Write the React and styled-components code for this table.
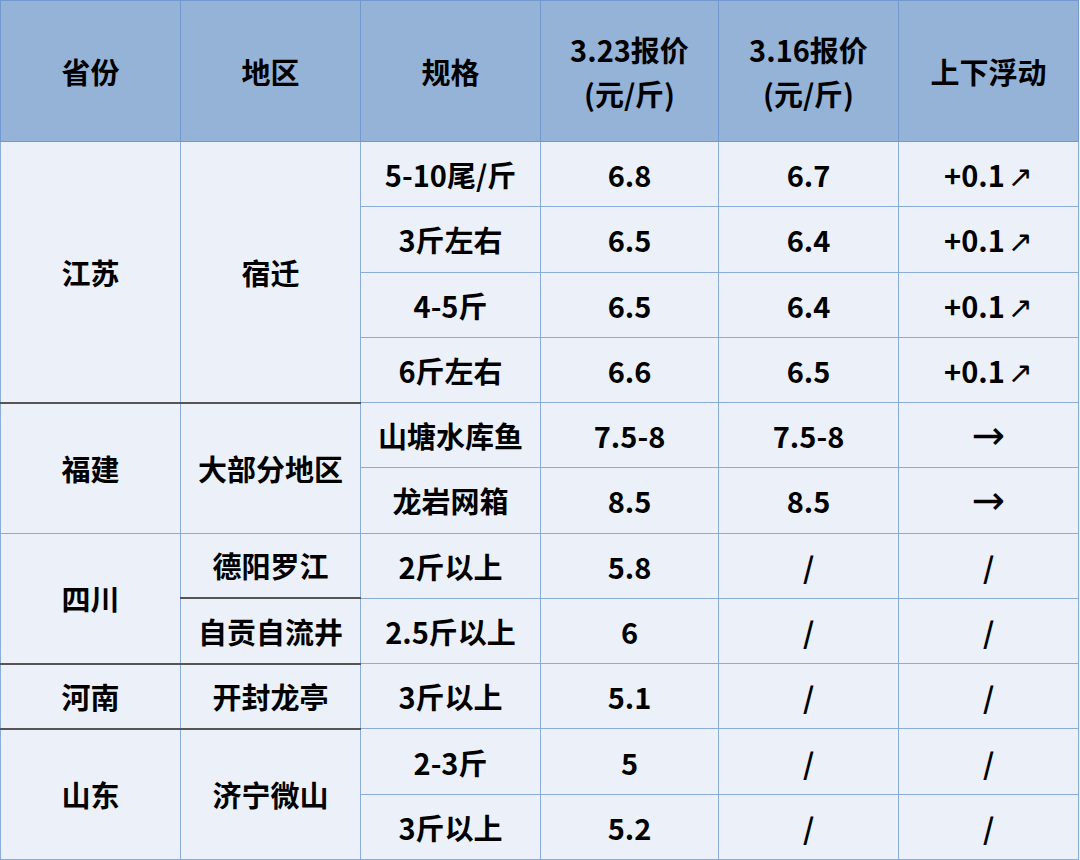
import React from 'react';
import styled, { createGlobalStyle } from 'styled-components';

const GlobalStyle = createGlobalStyle`
  html, body {
    margin: 0;
    padding: 0;
    background: #ecf1f9;
  }
  body {
    font-family: "Microsoft YaHei", "Noto Sans CJK SC", "Noto Sans", sans-serif;
  }
`;

const headers = ['省份', '地区', '规格', ['3.23报价', '(元/斤)'], ['3.16报价', '(元/斤)'], '上下浮动'];

// province / region cells carry rowSpan, the rest are plain
const rows = [
  { prov: ['江苏', 4], area: ['宿迁', 4], spec: '5-10尾/斤', now: '6.8', prev: '6.7', diff: '+0.1', arrow: '↗' },
  { spec: '3斤左右', now: '6.5', prev: '6.4', diff: '+0.1', arrow: '↗' },
  { spec: '4-5斤', now: '6.5', prev: '6.4', diff: '+0.1', arrow: '↗' },
  { spec: '6斤左右', now: '6.6', prev: '6.5', diff: '+0.1', arrow: '↗' },
  { prov: ['福建', 2], area: ['大部分地区', 2], spec: '山塘水库鱼', now: '7.5-8', prev: '7.5-8', arrow: '→', sep: true },
  { spec: '龙岩网箱', now: '8.5', prev: '8.5', arrow: '→' },
  { prov: ['四川', 2], area: ['德阳罗江', 1], spec: '2斤以上', now: '5.8', prev: '/', diff: '/' },
  { area: ['自贡自流井', 1], spec: '2.5斤以上', now: '6', prev: '/', diff: '/', areaSep: true },
  { prov: ['河南', 1], area: ['开封龙亭', 1], spec: '3斤以上', now: '5.1', prev: '/', diff: '/', sep: true },
  { prov: ['山东', 2], area: ['济宁微山', 2], spec: '2-3斤', now: '5', prev: '/', diff: '/', sep: true },
  { spec: '3斤以上', now: '5.2', prev: '/', diff: '/' },
];

const App = () => (
  <>
    <GlobalStyle />
    <Table>
      <colgroup>
        {headers.map((_, i) => (
          <col key={i} style={{ width: i === 3 ? '178px' : '180px' }} />
        ))}
      </colgroup>
      <thead>
        <tr>
          {headers.map((h, i) => (
            <HeadCell key={i}>
              {Array.isArray(h) ? (
                <>
                  {h[0]}
                  <br />
                  {h[1]}
                </>
              ) : (
                h
              )}
            </HeadCell>
          ))}
        </tr>
      </thead>
      <tbody>
        {rows.map((r, i) => (
          <BodyRow key={i}>
            {r.prov && (
              <Cell rowSpan={r.prov[1]} $dark={r.sep}>
                {r.prov[0]}
              </Cell>
            )}
            {r.area && (
              <Cell rowSpan={r.area[1]} $dark={r.sep || r.areaSep}>
                {r.area[0]}
              </Cell>
            )}
            <Cell>{r.spec}</Cell>
            <Cell>{r.now}</Cell>
            <Cell>{r.prev}</Cell>
            <Cell>
              {r.diff}
              {r.arrow && <Arrow $long={r.arrow === '→'}>{r.arrow}</Arrow>}
            </Cell>
          </BodyRow>
        ))}
      </tbody>
    </Table>
  </>
);

export default App;

const Table = styled.table`
  width: 1078px;
  height: 860px;
  table-layout: fixed;
  border-collapse: collapse;
  background: #ecf1f9;
  color: #000;
`;

const HeadCell = styled.th`
  height: 140px;
  padding: 0;
  background: #95b3d7;
  border: 1px solid #7199cf;
  font-size: 29px;
  font-weight: 700;
  line-height: 44px;
  text-align: center;
  vertical-align: middle;
`;

const BodyRow = styled.tr`
  height: 65px;
`;

const Cell = styled.td`
  padding: 0;
  border: 1px solid #8aacdb;
  border-top: ${({ $dark }) => ($dark ? '2px solid #555' : '1px solid #8aacdb')};
  font-size: 29px;
  font-weight: 700;
  line-height: 40px;
  text-align: center;
  vertical-align: middle;
  white-space: nowrap;
`;

const Arrow = styled.span`
  font-family: "DejaVu Sans", sans-serif;
  font-weight: 400;
  font-size: ${({ $long }) => ($long ? '40px' : '30px')};
  line-height: 1;
  margin-left: ${({ $long }) => ($long ? '0' : '3px')};
`;
